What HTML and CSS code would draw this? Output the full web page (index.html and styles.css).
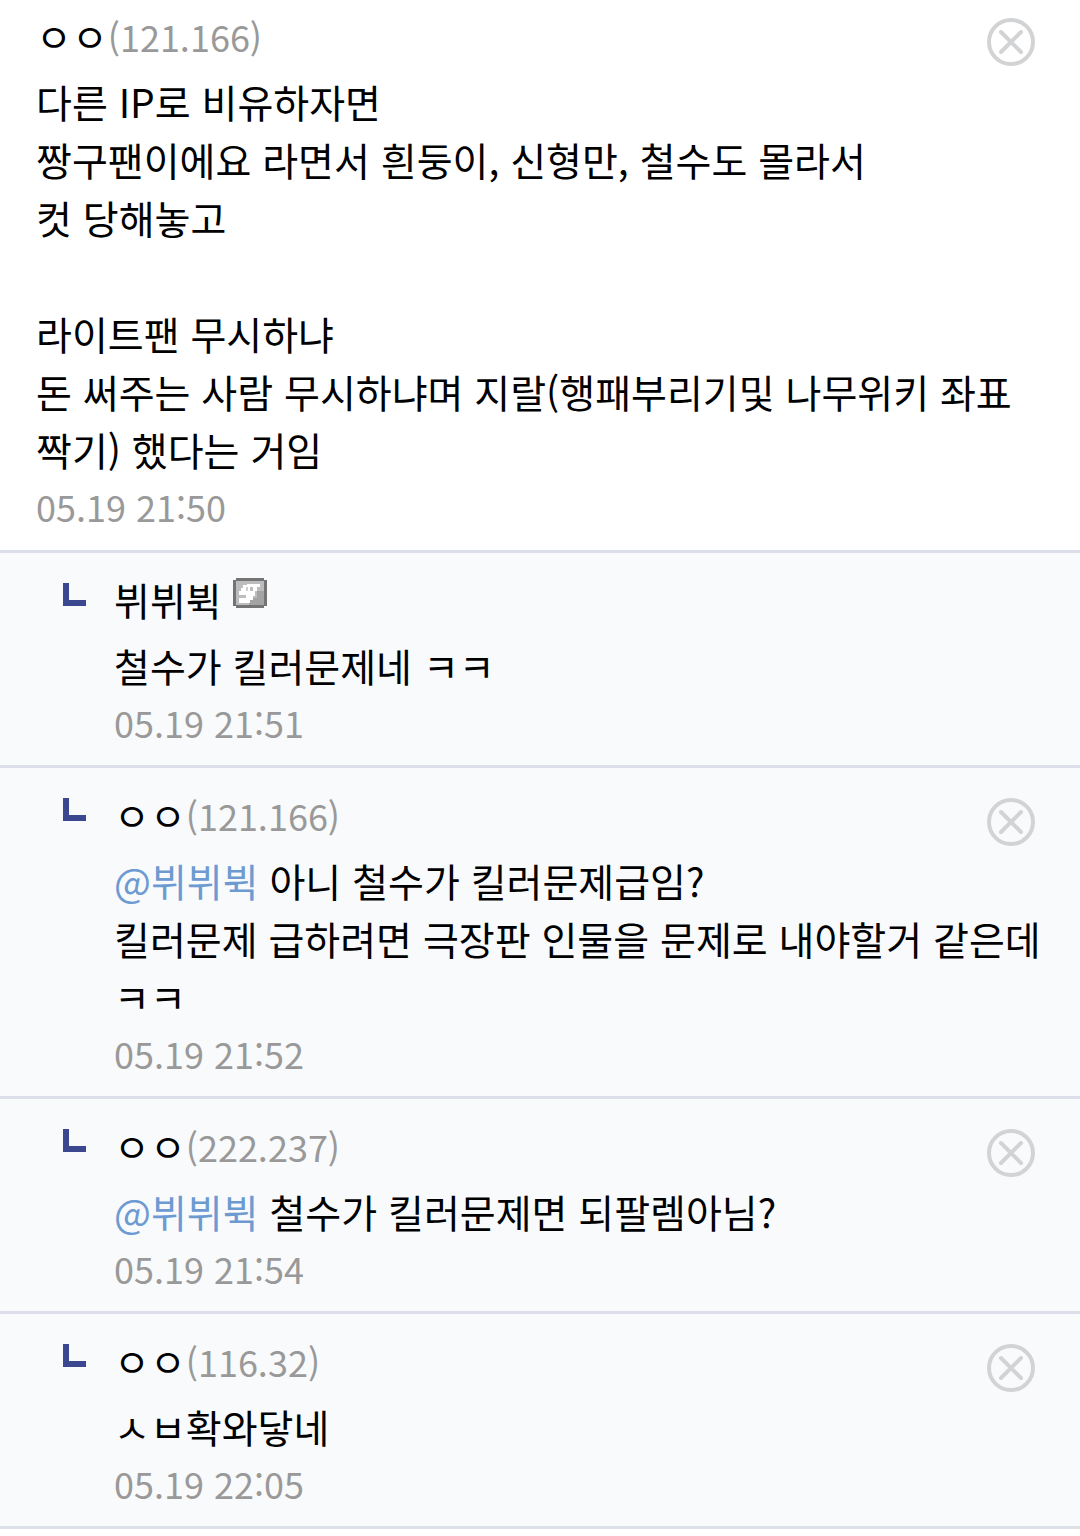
FILE: index.html
```html
<!DOCTYPE html>
<html lang="ko">
<head>
    <meta charset="UTF-8">
    <meta name="viewport" content="width=device-width, initial-scale=1.0">
    <title>댓글</title>
    <link rel="stylesheet" href="styles.css">
</head>
<body>

    <svg class="symbols" aria-hidden="true">
        <symbol id="icon-delete" viewBox="0 0 48 48">
            <circle cx="24" cy="24" r="22"/>
            <path d="M14 14L34 34M34 14L14 34"/>
        </symbol>
    </svg>

    <ul class="comment-list">
        <li class="comment">
            <div class="comment-body">
                <div class="writer">ㅇㅇ<span class="ip">(121.166)</span></div>
                <p class="text">다른 IP로 비유하자면<br>짱구팬이에요 라면서 흰둥이, 신형만, 철수도 몰라서<br>컷 당해놓고<br><br>라이트팬 무시하냐<br>돈 써주는 사람 무시하냐며 지랄(행패부리기및 나무위키 좌표 짝기) 했다는 거임</p>
                <time class="date">05.19 21:50</time>
            </div>
            <button class="btn-delete" type="button" aria-label="삭제"><svg><use href="#icon-delete"/></svg></button>
        </li>

        <li class="comment reply">
            <div class="comment-body">
                <div class="writer">뷔뷔뷕
                    <svg class="badge" viewBox="0 0 34 30" aria-hidden="true">
                        <path d="M3 0H31V2H34V28H31V30H3V28H0V2H3Z" fill="#747474"/>
                        <path d="M3 3H31V27H3Z" fill="#a3a3a3"/>
                        <path d="M3 3H31V13H24V20H16V27H3Z" fill="#bdbdbd"/>
                        <path d="M10 7H14V6H27V9H24V13H22V18H20V22H17V25H6V20H13V17H6V13H8V10H10ZM17 9V13H20V9Z" fill="#fff"/>
                        <path d="M13 9H15V13H13Z" fill="#cfcfcf"/>
                    </svg>
                </div>
                <p class="text">철수가 킬러문제네 ㅋㅋ</p>
                <time class="date">05.19 21:51</time>
            </div>
        </li>

        <li class="comment reply">
            <div class="comment-body">
                <div class="writer">ㅇㅇ<span class="ip">(121.166)</span></div>
                <p class="text"><a class="mention" href="#">@뷔뷔뷕</a> 아니 철수가 킬러문제급임?<br>킬러문제 급하려면 극장판 인물을 문제로 내야할거 같은데 ㅋㅋ</p>
                <time class="date">05.19 21:52</time>
            </div>
            <button class="btn-delete" type="button" aria-label="삭제"><svg><use href="#icon-delete"/></svg></button>
        </li>

        <li class="comment reply">
            <div class="comment-body">
                <div class="writer">ㅇㅇ<span class="ip">(222.237)</span></div>
                <p class="text"><a class="mention" href="#">@뷔뷔뷕</a> 철수가 킬러문제면 되팔렘아님?</p>
                <time class="date">05.19 21:54</time>
            </div>
            <button class="btn-delete" type="button" aria-label="삭제"><svg><use href="#icon-delete"/></svg></button>
        </li>

        <li class="comment reply">
            <div class="comment-body">
                <div class="writer">ㅇㅇ<span class="ip">(116.32)</span></div>
                <p class="text">ㅅㅂ확와닿네</p>
                <time class="date">05.19 22:05</time>
            </div>
            <button class="btn-delete" type="button" aria-label="삭제"><svg><use href="#icon-delete"/></svg></button>
        </li>
    </ul>

</body>
</html>
```
FILE: styles.css
```css
* {
    box-sizing: border-box;
}

body {
    margin: 0;
    background-color: #fff;
    color: #000;
    font-family: "Noto Sans CJK KR", sans-serif;
    font-size: 39px;
    line-height: 58px;
}

.symbols {
    display: none;
}

.comment-list {
    margin: 0;
    padding: 0;
    list-style: none;
}

.comment {
    position: relative;
    padding: 6px 36px 16px;
    border-bottom: 3px solid #dcdfea;
}

/* 답글 */
.reply {
    padding: 17px 36px 15px 114px;
    background-color: #f9fafc;
}

.reply::before {
    content: "";
    position: absolute;
    top: 30px;
    left: 63px;
    width: 17px;
    height: 17px;
    border: solid #3b4890;
    border-width: 0 0 6px 6px;
}

.comment:last-child {
    border-color: #dde2e8;
}

.writer {
    margin-bottom: 8px;
}

.ip,
.date {
    color: #999;
    font-size: 36px;
}

.ip {
    line-height: 1;
}

.text {
    margin: 0;
}

.date {
    display: block;
    line-height: 56px;
}

.badge {
    width: 34px;
    height: 30px;
    vertical-align: 8px;
}

.mention {
    color: #6d9bd1;
    text-decoration: none;
}

/* 삭제 버튼 */
.btn-delete {
    position: absolute;
    top: 18px;
    right: 45px;
    width: 48px;
    height: 48px;
    padding: 0;
    border: 0;
    background: none;
    cursor: pointer;
}

.reply .btn-delete {
    top: 30px;
}

.btn-delete svg {
    display: block;
    width: 48px;
    height: 48px;
    fill: none;
    stroke: #d2d3d5;
    stroke-width: 4;
    stroke-linecap: round;
}
```
